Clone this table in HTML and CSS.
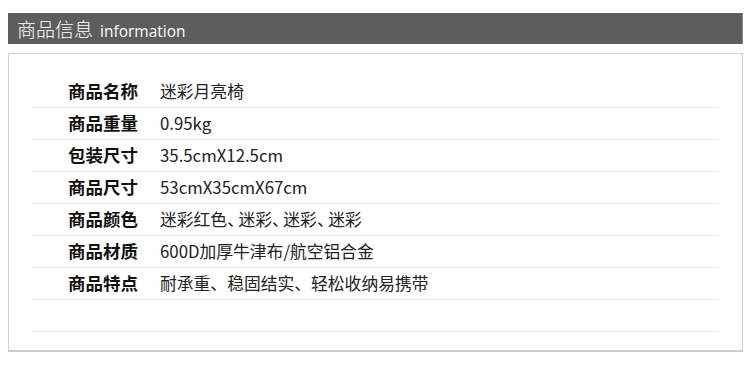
FILE: index.html
```html
<!DOCTYPE html>
<html lang="zh-CN">
<head>
<meta charset="utf-8">
<title>商品信息</title>
<link rel="stylesheet" href="styles.css">
</head>
<body>
<div class="header"><span class="title-cn">商品信息</span><span class="title-en">information</span></div>
<div class="box">
  <div class="row"><span class="label">商品名称</span><span class="value">迷彩月亮椅</span></div>
  <div class="row"><span class="label">商品重量</span><span class="value">0.95kg</span></div>
  <div class="row"><span class="label">包装尺寸</span><span class="value">35.5cmX12.5cm</span></div>
  <div class="row"><span class="label">商品尺寸</span><span class="value">53cmX35cmX67cm</span></div>
  <div class="row"><span class="label">商品颜色</span><span class="value">迷彩红色<span class="dun">、</span>迷彩<span class="dun">、</span>迷彩<span class="dun">、</span>迷彩</span></div>
  <div class="row"><span class="label">商品材质</span><span class="value">600D加厚牛津布/航空铝合金</span></div>
  <div class="row"><span class="label">商品特点</span><span class="value">耐承重、稳固结实、轻松收纳易携带</span></div>
  <div class="row"></div>
</div>
</body>
</html>
```

FILE: styles.css
```css
html, body {
  margin: 0;
  padding: 0;
  background: #ffffff;
  font-family: "Noto Sans CJK SC", "Noto Sans", sans-serif;
}

.header {
  margin: 13px 7px 0 8px;
  height: 31px;
  background: #5d5d5d;
  color: #ffffff;
  display: flex;
  align-items: baseline;
  padding-left: 9px;
  box-sizing: border-box;
  border-right: 1px solid #8a8a8a;
}

.title-cn {
  font-size: 19px;
  font-weight: 300;
  line-height: 31px;
}

.title-en {
  font-family: "Open Sans", "Noto Sans", sans-serif;
  font-size: 15.5px;
  font-weight: 400;
  margin-left: 7px;
  line-height: 31px;
}

.box {
  margin: 9px 7px 0 8px;
  height: 299px;
  box-sizing: border-box;
  border: 1px solid #d2d2d2;
  border-bottom: 2px solid #cdcdcd;
  padding: 22px 24px 0 23px;
}

.row {
  height: 32px;
  box-sizing: border-box;
  border-bottom: 1.5px solid #e9e9e9;
  display: flex;
  align-items: center;
  padding-bottom: 2px;
}

.label {
  width: 92px;
  padding-left: 36px;
  font-size: 17.5px;
  font-weight: 700;
  color: #111111;
  flex: none;
}

.value {
  font-size: 16.8px;
  font-weight: 400;
  color: #222222;
}

.dun {
  letter-spacing: -5.5px;
}
```
